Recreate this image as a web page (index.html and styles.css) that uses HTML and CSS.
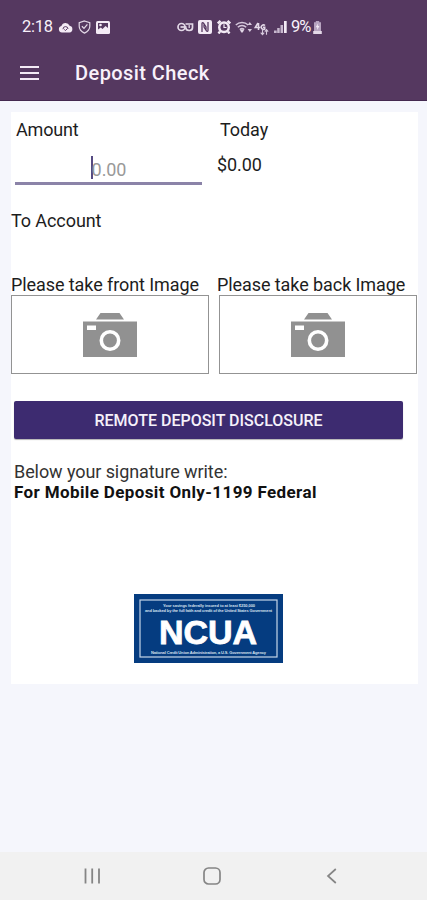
FILE: index.html
```html
<!DOCTYPE html>
<html lang="en">
<head>
    <meta charset="UTF-8">
    <meta name="viewport" content="width=device-width, initial-scale=1.0">
    <title>Deposit Check</title>
    <link rel="stylesheet" href="styles.css">
</head>
<body>
    <div class="screen">
        <header class="header">
            <div class="status-bar">
                <div class="status-left">
                    <span class="clock">2:18</span>
                    <svg class="icon-cloud" width="15" height="12" viewBox="0 0 15 12">
                        <path d="M4 11.5a3.3 3.3 0 0 1-.6-6.5A4.4 4.4 0 0 1 11.600 4.800 3.400 3.400 0 0 1 11.500 11.500z" fill="#f3eaf5"/>
                        <path d="M5 8.200a2.500 2.500 0 0 1 5-.2M6.300 8.500l1.200 1 1.700-1.700" fill="none" stroke="#553860" stroke-width="1"/>
                    </svg>
                    <svg class="icon-shield" width="13" height="14" viewBox="0 0 13 14">
                        <path d="M6.500 1l5.300 1.700v3.500c0 3-2 5.300-5.300 6.900C3.200 11.500 1.200 9.200 1.200 6.200V2.700z" fill="none" stroke="#e3d8e7" stroke-width="1.200"/>
                        <path d="M3.900 6.200l2.100 2.200 3.400-4" fill="none" stroke="#e3d8e7" stroke-width="1.300"/>
                    </svg>
                    <svg class="icon-photo" width="14" height="13" viewBox="0 0 14 13">
                        <rect width="14" height="13" rx="1.500" fill="#f3eaf5"/>
                        <path d="M2 2h10v5L9.500 5 6.500 8 4.800 6.500 2 8.500z" fill="#553860"/>
                        <circle cx="4.500" cy="4" r="1.300" fill="#f3eaf5"/>
                    </svg>
                </div>
                <div class="status-right">
                    <svg width="17" height="10" viewBox="0 0 17 10">
                        <circle cx="4.500" cy="5" r="3.500" fill="none" stroke="#e3d8e7" stroke-width="1.700"/>
                        <path d="M3.500 5h6" stroke="#e3d8e7" stroke-width="1.700"/>
                        <path d="M8.500 2h7v3.500c0 1.700-1.200 3-3.300 3S8.800 7.200 8.800 5.500" fill="none" stroke="#e3d8e7" stroke-width="1.700"/>
                        <path d="M12.200 3v3" stroke="#e3d8e7" stroke-width="1.200"/>
                    </svg>
                    <svg class="icon-nfc" width="14" height="14" viewBox="0 0 14 14">
                        <rect width="14" height="14" rx="2" fill="#f3eaf5"/>
                        <path d="M4 12V3.500c0-1 1-1 1.500-.3L8 7v2.500M10 2v8.500c0 1-1 1-1.500.3L6 7V4.500" fill="none" stroke="#553860" stroke-width="1.300"/>
                    </svg>
                    <svg class="icon-alarm" width="14" height="14" viewBox="0 0 14 14">
                        <circle cx="7" cy="7.300" r="6" fill="#f3eaf5"/>
                        <path d="M.8 3.500L3.500.8M13.200 3.500L10.500.8M3 11.500l-1.500 2M11 11.500l1.500 2" stroke="#f3eaf5" stroke-width="2.400"/>
                        <circle cx="7" cy="7.300" r="3.500" fill="#553860"/>
                        <path d="M7 4.300v3.200h2.500" fill="none" stroke="#f3eaf5" stroke-width="1.200"/>
                    </svg>
                    <svg class="icon-wifi" width="18" height="13" viewBox="0 0 18 13">
                        <path d="M.8 4a9 9 0 0 1 12.400 0M2.800 6.300a6 6 0 0 1 8.400 0M4.800 8.600a3.300 3.300 0 0 1 4.400 0" fill="none" stroke="#d6c8dc" stroke-width="1.500"/>
                        <path d="M7 12L5 9.500a3 3 0 0 1 4 0z" fill="#e3d8e7"/>
                        <path d="M14.800 1L17 4h-4.400zM14.800 11l2.200-3h-4.400z" fill="#d6c8dc"/>
                    </svg>
                    <svg class="icon-lte" width="15" height="14" viewBox="0 0 15 14">
                        <path d="M4 1L1.200 5.500h5M4.500 1v7M11 3.500a2.200 2.200 0 1 0-.3 3.500V5.300H9" fill="none" stroke="#e3d8e7" stroke-width="1.600"/>
                        <path d="M8.500 7.500v5M6.700 10.700l1.800 2 1.700-2M12.500 12.700v-5M10.800 9.700l1.700-2 1.700 2" fill="none" stroke="#d6c8dc" stroke-width="1.100"/>
                    </svg>
                    <svg class="icon-signal" width="13" height="12" viewBox="0 0 13 12">
                        <path d="M0 12V9.500h2.700V12zM3.200 12V7h2.500v5zM6.500 12V4h2.500v8z" fill="#c8b8cf"/>
                        <path d="M10 12V0h2.700v12z" fill="#f3eaf5"/>
                    </svg>
                    <span class="battery-text">9%</span>
                    <svg class="icon-battery" width="9" height="13" viewBox="0 0 9 13">
                        <path d="M2.800 0h3.400v1.200H8V10H1V1.200h1.800z" fill="#b7a4c0"/>
                        <path d="M.2 10h8.600v3H.2z" fill="#e3d8e7"/>
                        <path d="M5 2.500L2.700 6.300h1.500V9l2.200-4H4.800z" fill="#f3eaf5"/>
                    </svg>
                </div>
            </div>
            <div class="title-bar">
                <div class="menu">
                    <span></span>
                    <span></span>
                    <span></span>
                </div>
                <h1>Deposit Check</h1>
            </div>
        </header>

        <main class="content">
            <div class="card">
                <div class="amounts">
                    <div class="amount-col">
                        <p class="label">Amount</p>
                        <div class="amount-field"><span class="cursor"></span><span class="placeholder">0.00</span></div>
                    </div>
                    <div class="today-col">
                        <p class="label">Today</p>
                        <p class="today-value">$0.00</p>
                    </div>
                </div>

                <p class="to-account">To Account</p>

                <div class="images">
                    <div class="image-col">
                        <p class="image-label">Please take front Image</p>
                        <div class="image-box">
                            <svg width="54" height="44" viewBox="0 0 54 44">
                                <path d="M17.500 0h19l4.500 6.500H13zM0 8.500h54V44H0z" fill="#919191"/>
                                <rect x="4" y="12.500" width="9" height="4.500" fill="#fff"/>
                                <circle cx="27" cy="27.500" r="8.700" fill="none" stroke="#fff" stroke-width="3.600"/>
                            </svg>
                        </div>
                    </div>
                    <div class="image-col">
                        <p class="image-label back">Please take back Image</p>
                        <div class="image-box">
                            <svg width="54" height="44" viewBox="0 0 54 44">
                                <path d="M17.500 0h19l4.500 6.500H13zM0 8.500h54V44H0z" fill="#919191"/>
                                <rect x="4" y="12.500" width="9" height="4.500" fill="#fff"/>
                                <circle cx="27" cy="27.500" r="8.700" fill="none" stroke="#fff" stroke-width="3.600"/>
                            </svg>
                        </div>
                    </div>
                </div>

                <button class="disclosure">REMOTE DEPOSIT DISCLOSURE</button>

                <div class="signature">
                    <p>Below your signature write:</p>
                    <p class="bold">For Mobile Deposit Only-1199 Federal</p>
                </div>

                <svg class="ncua" width="149" height="69" viewBox="0 0 149 69">
                    <rect width="149" height="69" fill="#053c80"/>
                    <rect x="6" y="6" width="137" height="57" fill="none" stroke="#c5d5e8" stroke-width="1.200"/>
                    <g class="ncua-small">
                        <text x="29" y="12.800" textLength="92">Your savings federally insured to at least $250,000</text>
                        <text x="11" y="18.200" textLength="127">and backed by the full faith and credit of the United States Government</text>
                        <text x="17" y="60" textLength="115">National Credit Union Administration, a U.S. Government Agency</text>
                    </g>
                    <text class="ncua-name" x="25" y="49.500" textLength="98" lengthAdjust="spacingAndGlyphs">NCUA</text>
                </svg>
            </div>
        </main>

        <nav class="nav-bar">
            <svg width="18" height="18" viewBox="0 0 18 18">
                <path d="M2.500 1.500v15M9.200 1.500v15M16 1.500v15" stroke="#858585" stroke-width="1.800"/>
            </svg>
            <svg width="18" height="18" viewBox="0 0 18 18">
                <rect x="1" y="1" width="16" height="16" rx="4.500" fill="none" stroke="#858585" stroke-width="1.700"/>
            </svg>
            <svg width="18" height="18" viewBox="0 0 18 18">
                <path d="M12.800 2L5 9l7.800 7" fill="none" stroke="#858585" stroke-width="1.700"/>
            </svg>
        </nav>
    </div>
</body>
</html>
```
FILE: styles.css
```css
* {
    margin: 0;
    padding: 0;
    box-sizing: border-box;
}
body {
    font-family: Roboto, 'Liberation Sans', sans-serif;
    font-size: 18px;
    line-height: 20px;
    letter-spacing: -0.08px;
    color: #1d1d1d;
    background-color: #f5f6fc;
}
svg {
    display: block;
    flex-shrink: 0;
}
.screen {
    width: 427px;
    height: 900px;
    display: flex;
    flex-direction: column;
}
.header {
    height: 101px;
    background-color: #553860;
    border-bottom: 1px solid #442950;
    color: #f8f1fa;
}
.status-bar {
    height: 45px;
    padding: 9px 105px 0 22px;
    display: flex;
    justify-content: space-between;
}
.status-left, .status-right {
    height: 36px;
    display: flex;
    align-items: center;
}
.clock {
    width: 36px;
    font-size: 16.5px;
    letter-spacing: -0.3px;
}
.icon-shield {
    margin-left: 5px;
}
.icon-photo {
    margin-left: 5px;
}
.icon-nfc {
    margin-left: 4px;
}
.icon-alarm {
    margin-left: 5px;
}
.icon-wifi {
    margin-left: 4px;
}
.icon-lte {
    margin-left: 1px;
    margin-top: 3px;
}
.icon-signal {
    margin-left: 5px;
}
.battery-text {
    width: 22px;
    margin-left: 4px;
    font-size: 16.5px;
    letter-spacing: -1px;
}
.title-bar {
    height: 55px;
    padding-left: 20px;
    display: flex;
    align-items: center;
}
.menu {
    width: 19px;
    margin-right: 36px;
    display: flex;
    flex-direction: column;
    gap: 4px;
}
.menu span {
    height: 2px;
    background-color: #f3eaf5;
}
.title-bar h1 {
    font-size: 20px;
    font-weight: 500;
    letter-spacing: 0.43px;
}
.content {
    flex: 1;
    padding: 11px 9px 0 11px;
}
.card {
    height: 572px;
    padding-top: 8px;
    background-color: #fff;
}
.amounts {
    display: flex;
}
.amount-col {
    width: 204px;
    padding-left: 4px;
}
.amount-col .label {
    padding-left: 1px;
    letter-spacing: -0.2px;
}
.amount-field {
    width: 187px;
    height: 29px;
    margin-top: 16px;
    border-bottom: 3px solid #8b83a8;
    color: #999;
    display: flex;
    justify-content: center;
}
.cursor {
    width: 2px;
    height: 23px;
    background-color: #554a82;
}
.placeholder {
    line-height: 27px;
    margin-left: -1px;
}
.today-col {
    padding-left: 2px;
}
.today-col .label {
    padding-left: 3px;
}
.today-value {
    margin-top: 15px;
}
.to-account {
    margin-top: 26px;
}
.images {
    margin-top: 44px;
    display: flex;
    gap: 10px;
}
.image-col {
    width: 198px;
}
.image-label {
    white-space: nowrap;
}
.image-label.back {
    margin-left: -2px;
}
.image-box {
    height: 79px;
    padding: 1px 1px 0 0;
    border: 1px solid #939393;
    display: flex;
    align-items: center;
    justify-content: center;
}
.disclosure {
    display: block;
    width: 389px;
    height: 38px;
    margin: 27px 0 0 3px;
    border: none;
    border-radius: 2px;
    background-color: #3d2b70;
    box-shadow: 0 1px 1px rgba(0, 0, 0, 0.3);
    color: #f5f1fa;
    font-family: inherit;
    font-size: 16px;
    font-weight: 500;
}
.signature {
    margin-top: 22px;
    padding-left: 3px;
    line-height: 21px;
    color: #333;
}
.signature .bold {
    font-size: 17px;
    font-weight: 700;
    letter-spacing: 0.38px;
    color: #111;
}
.ncua {
    margin: 91px auto 0 123px;
}
.ncua-small {
    font-family: 'Liberation Sans', sans-serif;
    font-size: 4px;
    font-weight: 700;
    fill: #d5e0ee;
}
.ncua-name {
    font-family: 'Liberation Sans', sans-serif;
    font-size: 34px;
    font-weight: 700;
    fill: #fff;
    stroke: #fff;
    stroke-width: 0.8px;
}
.nav-bar {
    height: 48px;
    padding: 0 86px 0 83px;
    background-color: #f1f1f1;
    display: flex;
    align-items: center;
    justify-content: space-between;
}
```
